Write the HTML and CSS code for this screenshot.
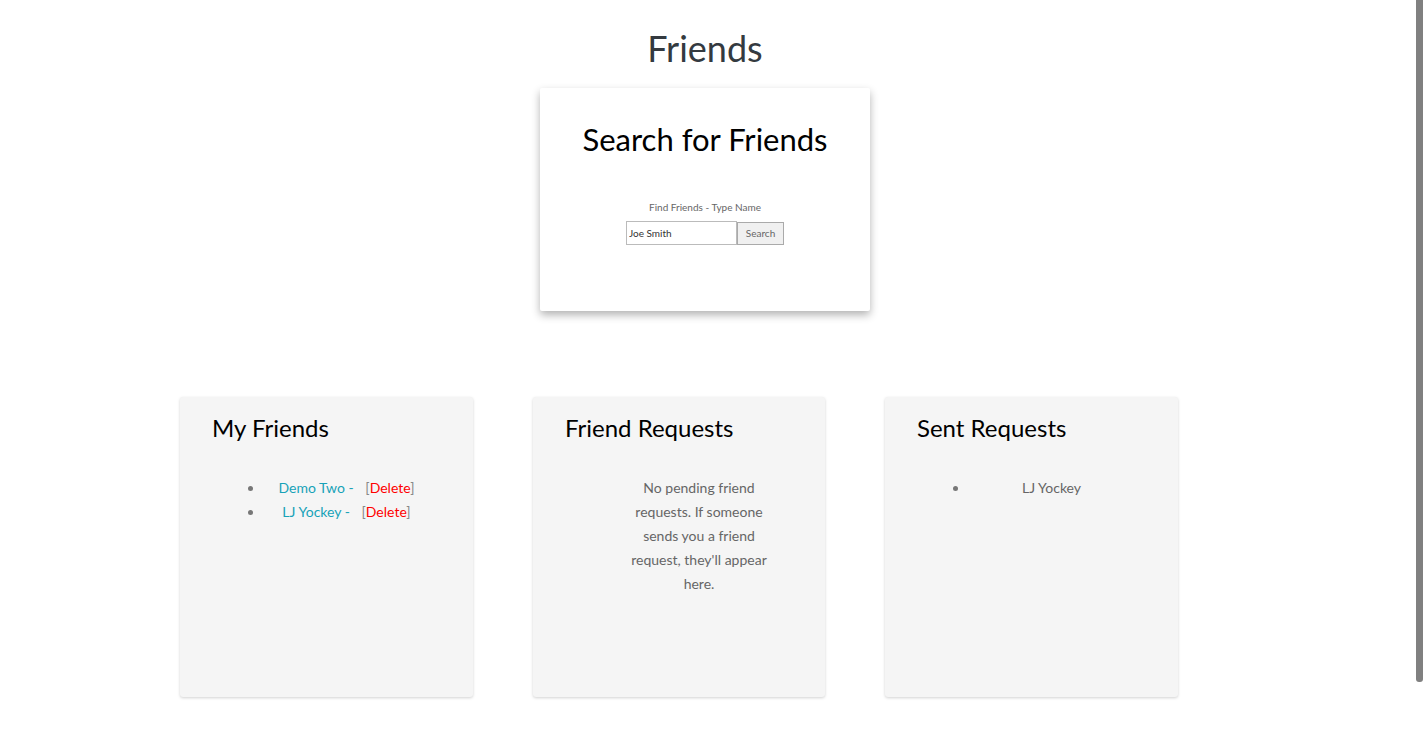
FILE: index.html
```html
<!DOCTYPE html>
<html lang="en">
<head>
<meta charset="utf-8">
<title>Friends</title>
<link rel="stylesheet" href="styles.css">
</head>
<body>
<main class="page">
  <h1 class="page-title">Friends</h1>
  <section class="search-card">
    <h2 class="search-title">Search for Friends</h2>
    <form class="search-form">
      <label class="search-label" for="q">Find Friends - Type Name</label>
      <div class="search-row">
        <input id="q" class="search-input" type="text" value="Joe Smith">
        <button class="search-btn" type="button">Search</button>
      </div>
    </form>
  </section>
  <div class="cards">
    <section class="card">
      <h3 class="card-title">My Friends</h3>
      <ul class="card-list bullets">
        <li><a class="friend">Demo Two -</a> <span class="del">[<a>Delete</a>]</span></li>
        <li><a class="friend">LJ Yockey -</a> <span class="del">[<a>Delete</a>]</span></li>
      </ul>
    </section>
    <section class="card">
      <h3 class="card-title">Friend Requests</h3>
      <div class="card-list">
        <p class="empty">No pending friend<br>requests. If someone<br>sends you a friend<br>request, they'll appear<br>here.</p>
      </div>
    </section>
    <section class="card">
      <h3 class="card-title">Sent Requests</h3>
      <ul class="card-list bullets">
        <li class="sent">LJ Yockey</li>
      </ul>
    </section>
  </div>
</main>
<div class="scrollbar" aria-hidden="true"></div>
</body>
</html>
```
FILE: styles.css
```css
html { background: #fff; }
body {
  margin: 0;
  padding-right: 15px;
  font-family: Lato, "Noto Sans", sans-serif;
  color: #333;
}
.scrollbar {
  position: fixed;
  top: 0;
  right: 2px;
  width: 7px;
  height: 682px;
  background: #808080;
  border-radius: 0 0 3px 3px;
}
.page {
  display: flex;
  flex-direction: column;
  align-items: center;
}
.page-title {
  margin: 26px 0 0;
  font-size: 36px;
  font-weight: 400;
  line-height: 44px;
  color: #343a40;
}
.search-card {
  margin-top: 18px;
  width: 330px;
  height: 223px;
  box-sizing: border-box;
  background: #fff;
  box-shadow: 0 4px 8px rgba(0,0,0,0.3);
  border-radius: 2px;
  display: flex;
  flex-direction: column;
  align-items: center;
}
.search-title {
  margin: 33px 0 0;
  font-size: 31px;
  font-weight: 400;
  line-height: 36px;
  color: #000;
}
.search-form {
  margin-top: 43px;
  display: flex;
  flex-direction: column;
  align-items: center;
}
.search-label {
  font-size: 10px;
  color: #666;
  line-height: 14px;
}
.search-row {
  margin-top: 7px;
  display: flex;
  align-items: center;
}
.search-input {
  width: 111px;
  height: 24px;
  box-sizing: border-box;
  border: 1px solid #bbb;
  padding: 0 2px;
  font-family: Lato, sans-serif;
  font-size: 10px;
  color: #333;
  outline: none;
}
.search-btn {
  width: 47px;
  height: 23px;
  box-sizing: border-box;
  border: 1px solid #aaa;
  background: #f0f0f0;
  font-family: Lato, sans-serif;
  font-size: 10px;
  color: #666;
  padding: 0;
}
.cards {
  align-self: flex-start;
  margin: 86px 0 28px 180px;
  display: flex;
  gap: 60px;
}
.card {
  width: 293px;
  height: 300px;
  box-sizing: border-box;
  padding: 15px 32px;
  background: #f5f5f5;
  border-radius: 3px;
  box-shadow: 0 1px 3px rgba(0,0,0,0.18);
}
.card:nth-child(2) { width: 292px; }
.card-title {
  margin: 0;
  font-size: 24px;
  font-weight: 400;
  line-height: 32px;
  color: #000;
}
.card-list {
  margin: 32px 0 0;
  padding-left: 40px;
  font-size: 14px;
  line-height: 24px;
  color: #666;
  text-align: center;
}
.card-list.bullets {
  padding-left: 52px;
  padding-right: 12px;
}
.card-list li::marker { color: #777; }
.friend { color: #17a2b8; }
.del { margin-left: 8px; color: #888; }
.del a { color: #f00; }
.empty { margin: 0; color: #666; }
```
